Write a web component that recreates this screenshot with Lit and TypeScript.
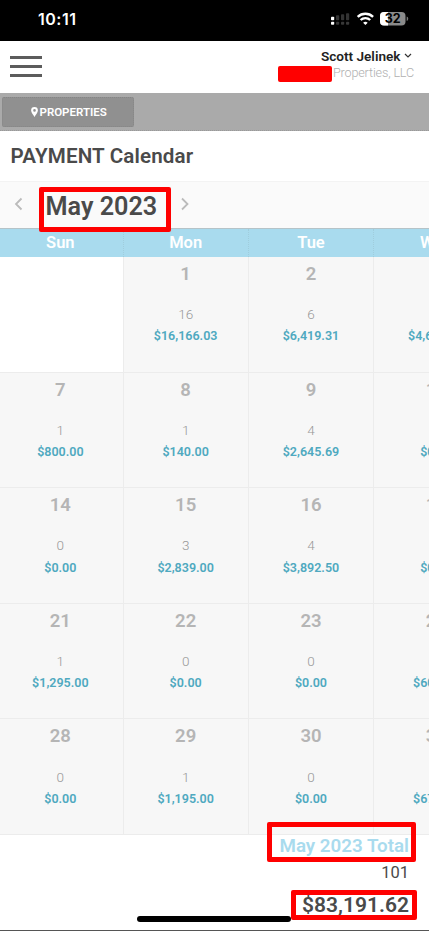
import { LitElement, html, css, svg } from "lit";
import { customElement, property } from "lit/decorators.js";

interface Day {
  date?: string;
  count?: string;
  amount?: string;
}

const day = (date: string, count: string, amount: string): Day => ({ date, count, amount });

const WEEKS: Day[][] = [
  [{}, day("1", "16", "$16,166.03"), day("2", "6", "$6,419.31"), day("3", "", "$4,685.00")],
  [day("7", "1", "$800.00"), day("8", "1", "$140.00"), day("9", "4", "$2,645.69"), day("10", "", "$0.00")],
  [day("14", "0", "$0.00"), day("15", "3", "$2,839.00"), day("16", "4", "$3,892.50"), day("17", "", "$0.00")],
  [day("21", "1", "$1,295.00"), day("22", "0", "$0.00"), day("23", "0", "$0.00"), day("24", "", "$600.00")],
  [day("28", "0", "$0.00"), day("29", "1", "$1,195.00"), day("30", "0", "$0.00"), day("31", "", "$675.00")],
];

@customElement("status-bar")
export class StatusBar extends LitElement {
  static styles = css`
    :host {
      display: flex;
      box-sizing: border-box;
      height: 41px;
      padding: 7px 18px 0 38px;
      background: #000;
      color: #fff;
      justify-content: space-between;
      align-items: flex-start;
    }
    .time {
      font: 600 16px/24px Inter, sans-serif;
      letter-spacing: 0.5px;
    }
    .icons {
      display: block;
    }
    .pct {
      font: 700 12.5px Inter, sans-serif;
    }
  `;
  render() {
    const bars = [0, 1, 2, 3].map((i) => {
      const h = [3.5, 5, 6, 7][i];
      return svg`
        <rect x=${i * 5} y=${13.2 - h} width="3.2" height=${h} rx="0.8" fill=${i === 0 ? "#fff" : "#333"}></rect>
        <rect x=${i * 5} y="14.8" width="3.2" height="3" rx="0.8" fill=${i === 0 ? "#fff" : "#383838"}></rect>`;
    });
    return html`
      <span class="time">10:11</span>
      <svg class="icons" width="80" height="24" viewBox="0 0 80 24">
        ${bars}
        <g fill="none" stroke="#fff" stroke-width="2.4">
          <path d="M26.7 9.8a11.2 11.2 0 0 1 15.4 0"></path>
          <path d="M29.6 13a7 7 0 0 1 9.6 0"></path>
        </g>
        <path d="M34.4 18.1l-2.3-2.4a3.4 3.4 0 0 1 4.6 0z" fill="#fff"></path>
        <rect x="49" y="5" width="25.5" height="13.5" rx="4" fill="#8a8a8a"></rect>
        <path d="M57 5v13.5h-4a4 4 0 0 1-4-4v-5.5a4 4 0 0 1 4-4z" fill="#fff"></path>
        <path d="M75.7 9.5a2.4 2.4 0 0 1 0 4.5z" fill="#777"></path>
        <text class="pct" x="61.7" y="16.2" text-anchor="middle" fill="#000">32</text>
      </svg>
    `;
  }
}

@customElement("day-cell")
export class DayCell extends LitElement {
  @property({ attribute: false }) day: Day = {};
  static styles = css`
    :host {
      display: flex;
      flex-direction: column;
      align-items: center;
      box-sizing: border-box;
      padding-top: 5px;
    }
    .date {
      height: 24px;
      font-size: 18.5px;
      line-height: 24px;
      font-weight: 600;
      color: #b5b5b5;
    }
    .count {
      height: 18px;
      margin-top: 19.2px;
      font-size: 13.5px;
      line-height: 18px;
      font-weight: 300;
      color: #979797;
    }
    .amount {
      margin-top: 3.3px;
      font-size: 12.5px;
      line-height: 20px;
      font-weight: 600;
      color: #4fa9c0;
    }
  `;
  render() {
    return html`
      <span class="date">${this.day.date}</span>
      <span class="count">${this.day.count}</span>
      <span class="amount">${this.day.amount}</span>
    `;
  }
}

@customElement("app-root")
export class AppRoot extends LitElement {
  static styles = css`
    :host {
      display: block;
      position: relative;
      box-sizing: border-box;
      width: 429px;
      height: 931px;
      overflow: hidden;
      background: #fff;
      border-bottom: 1px solid #555;
      font-family: Roboto, sans-serif;
      color: #4a4a4a;
    }
    .header {
      display: flex;
      box-sizing: border-box;
      justify-content: space-between;
      height: 52px;
      padding: 0 15px 0 10.4px;
    }
    .menu {
      display: flex;
      flex-direction: column;
      gap: 6.4px;
      padding-top: 14.5px;
    }
    .menu i {
      width: 31.5px;
      height: 3px;
      background: #5c5c5c;
    }
    .account {
      display: flex;
      flex-direction: column;
      align-items: flex-end;
      padding-top: 6px;
    }
    .user {
      display: flex;
      align-items: center;
      gap: 3px;
      margin-right: 2.5px;
      font-size: 13.6px;
      line-height: 18px;
      font-weight: 600;
      color: #222;
    }
    .company {
      display: flex;
      align-items: flex-start;
      gap: 1px;
      font-size: 12.6px;
      line-height: 15px;
      letter-spacing: -0.15px;
      font-weight: 300;
      color: #b0b0b0;
    }
    .redacted {
      width: 54px;
      height: 16px;
      border-radius: 2px;
      background: #f00;
      margin-top: 1px;
    }
    .toolbar {
      box-sizing: border-box;
      height: 38px;
      padding: 4px 2px;
      background: #aaa;
      border-bottom: 1px dotted #999;
    }
    .button {
      display: flex;
      box-sizing: border-box;
      align-items: center;
      gap: 2px;
      width: 132px;
      height: 30px;
      padding-left: 27.5px;
      border: 1px dotted #858585;
      border-radius: 2px;
      background: #909090;
      color: #fff;
      font-size: 11.5px;
      font-weight: 600;
    }
    .title {
      height: 50px;
      padding-left: 10.5px;
      font-size: 20.6px;
      line-height: 50px;
      font-weight: 600;
      letter-spacing: 0.15px;
    }
    .month-nav {
      display: flex;
      box-sizing: border-box;
      height: 47px;
      padding: 9px 0 0 14px;
      border-top: 1px solid #f3f3f3;
      background: #fafafa;
    }
    .month {
      width: 111px;
      margin: 1.5px 23px 0 21.5px;
      font-size: 25.2px;
      line-height: 28px;
      font-weight: 600;
      white-space: nowrap;
    }
    .chevron {
      margin-top: 6px;
    }
    .calendar {
      width: 877px;
      margin-left: -1.8px;
    }
    .weekdays {
      display: grid;
      grid-template-columns: repeat(7, 125.3px);
      box-sizing: border-box;
      height: 29px;
      border-top: 1px solid #b5c3c8;
      background: #a9dbee;
      color: #fff;
      font-size: 16.5px;
      line-height: 27px;
      font-weight: 600;
      text-align: center;
    }
    .weekdays span {
      border-right: 1px dotted #a0cddd;
    }
    .week {
      display: grid;
      grid-template-columns: repeat(7, 125.3px);
      height: 115.6px;
    }
    .cell {
      background: #f7f7f7;
      border-right: 1px solid #ececec;
      border-bottom: 1px solid #ececec;
    }
    .cell.empty {
      background: #fff;
    }
    .totals {
      display: flex;
      flex-direction: column;
      align-items: flex-end;
      padding-right: 20px;
    }
    .total-label {
      font-size: 18.8px;
      line-height: 23px;
      font-weight: 600;
      color: #a9dbee;
    }
    .total-count {
      margin-top: 4px;
      font-size: 16.5px;
      line-height: 22px;
    }
    .total-amount {
      margin-top: 8px;
      font-size: 21px;
      line-height: 26px;
      font-weight: 600;
    }
    .mark {
      position: absolute;
      box-sizing: border-box;
      border: 5px solid #f00;
      border-radius: 2px;
    }
    .mark-month {
      left: 39px;
      top: 187px;
      width: 132px;
      height: 45px;
    }
    .mark-total {
      left: 267px;
      top: 822px;
      width: 149px;
      height: 40px;
    }
    .mark-amount {
      left: 291px;
      top: 890px;
      width: 126px;
      height: 30px;
    }
    .home {
      position: absolute;
      left: 137px;
      top: 916px;
      width: 154px;
      height: 5.5px;
      border-radius: 3px;
      background: #000;
    }
  `;

  render() {
    return html`
      <status-bar></status-bar>
      <div class="header">
        <div class="menu"><i></i><i></i><i></i></div>
        <div class="account">
          <div class="user">
            Scott Jelinek
            <svg width="8" height="6" viewBox="0 0 8 6" fill="none" stroke="#333" stroke-width="1.2">
              <path d="M1 1l3 3 3-3"></path>
            </svg>
          </div>
          <div class="company"><span class="redacted"></span>Properties, LLC</div>
        </div>
      </div>
      <div class="toolbar">
        <div class="button">
          <svg width="7" height="10" viewBox="0 0 7 10">
            <path
              fill="#fff"
              fill-rule="evenodd"
              d="M3.5 0A3.4 3.4 0 0 0 .1 3.4C.1 5.5 2.3 7.6 3.5 10 4.7 7.6 6.9 5.5 6.9 3.4A3.4 3.4 0 0 0 3.5 0zm0 2.1a1.3 1.3 0 1 1 0 2.6 1.3 1.3 0 0 1 0-2.6z"
            ></path>
          </svg>
          PROPERTIES
        </div>
      </div>
      <div class="title">PAYMENT Calendar</div>
      <div class="month-nav">
        <svg class="chevron" width="10" height="14" viewBox="0 0 10 14" fill="none" stroke="#bbb" stroke-width="1.8">
          <path d="M7.5 1.5L2 7l5.5 5.5"></path>
        </svg>
        <div class="month">May 2023</div>
        <svg class="chevron" width="10" height="14" viewBox="0 0 10 14" fill="none" stroke="#bbb" stroke-width="1.8">
          <path d="M2 1.5L7.5 7 2 12.5"></path>
        </svg>
      </div>
      <div class="calendar">
        <div class="weekdays">
          ${["Sun", "Mon", "Tue", "Wed"].map((d) => html`<span>${d}</span>`)}
        </div>
        ${WEEKS.map(
          (week) => html`
            <div class="week">
              ${week.map((d) => html`<day-cell class="cell ${d.date ? "" : "empty"}" .day=${d}></day-cell>`)}
            </div>
          `
        )}
      </div>
      <div class="totals">
        <div class="total-label">May 2023 Total</div>
        <div class="total-count">101</div>
        <div class="total-amount">$83,191.62</div>
      </div>
      <div class="home"></div>
      <div class="mark mark-month"></div>
      <div class="mark mark-total"></div>
      <div class="mark mark-amount"></div>
    `;
  }
}
